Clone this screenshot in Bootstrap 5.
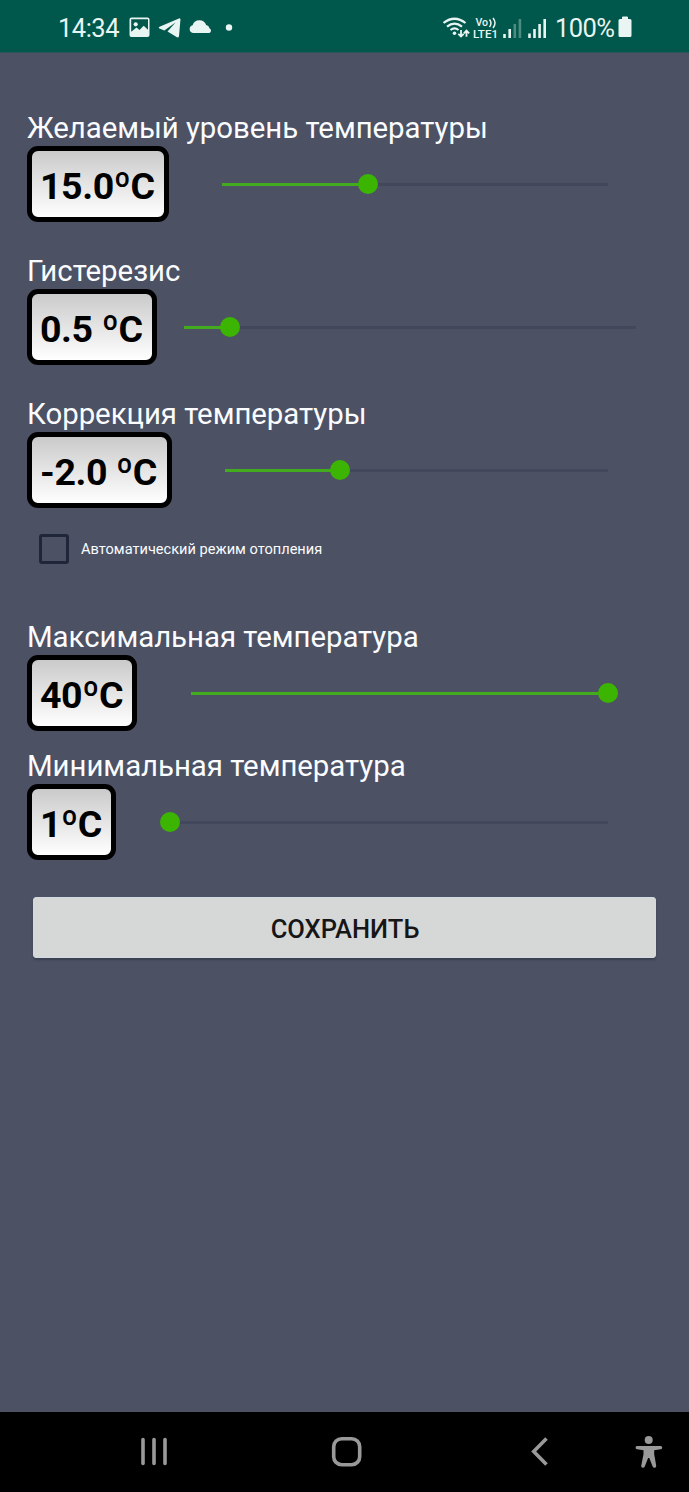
<!DOCTYPE html>
<html lang="ru">
<head>
<meta charset="utf-8">
<meta name="viewport" content="width=device-width, initial-scale=1">
<title>Настройки температуры</title>
<link href="https://cdn.jsdelivr.net/npm/bootstrap@5.3.0/dist/css/bootstrap.min.css" rel="stylesheet">
<style>
html,body{height:100%}
body{background:#4c5164;font-family:Roboto,"Noto Sans",sans-serif;color:#fafcff;overflow:hidden}
.statusbar{height:53px;background:#00574b;color:#e9f5f2;padding:3px 57px 0 58px;font-size:25.5px;line-height:50px;border-bottom:1px solid #2b5458}
.clock{width:71px;letter-spacing:-.5px}
.percent{width:63px;margin-left:4px;letter-spacing:-.6px}
.screen{padding:58px 27px 0}
.setting{height:111px;margin-bottom:32px}
.setting .title{height:35px;font-size:29.4px;line-height:34px;letter-spacing:-.04px;white-space:nowrap}
.value{width:var(--w);height:76px;border:5px solid #000;border-radius:11px;background:linear-gradient(#cacaca,#fff);color:#000;font-size:37.5px;font-weight:700;line-height:70px;letter-spacing:-.4px;padding-left:8px;white-space:nowrap}
.slider{height:3px;background:#42475b;margin-left:var(--gap);width:var(--len)}
.slider .fill{height:100%;width:var(--pos);background:#43ac1e}
.slider .thumb{width:20px;height:20px;border-radius:50%;background:#3cb502;left:var(--pos);top:50%;transform:translate(-50%,-50%)}
.auto{height:30px;margin:-6px 0 56px 12px}
.box{width:30px;height:30px;border:3px solid #20263a;border-radius:3px}
.auto-text{font-size:14.6px;margin-left:12px;line-height:30px;white-space:nowrap}
.save{margin:37px 6px 0;width:623px;height:61px;background:#d6d8d8;border:1px solid #d3dae1;border-radius:3px;color:#161616;font-size:25.5px;font-weight:500;line-height:61px;padding:1px 0 0 1px;box-shadow:0 2px 2px #3b4051}
.navbar-sys{height:80px;background:#000}
</style>
</head>
<body class="d-flex flex-column">
<header class="statusbar d-flex align-items-center justify-content-between flex-shrink-0">
  <div class="d-flex align-items-center">
    <span class="clock">14:34</span>
    <svg width="106" height="30" viewBox="129 12 106 30" fill="#e9f5f2">
      <path fill-rule="evenodd" d="M131.500 16.500h16a2 2 0 0 1 2 2v15.500a2 2 0 0 1-2 2h-16a2 2 0 0 1-2-2v-15.500a2 2 0 0 1 2-2zm-.3 1.700v12.500l5.300-4.300 3 2.500 4.200-4.200 4.300 4v-10.500z"/>
      <circle cx="135.700" cy="23.300" r="2.100"/>
      <path d="M179.500 17.300L159.500 25.800C158.500 26.400 158.600 27.200 159.500 27.600L164.300 29.500L175.500 21.500L167.500 30.500L177 36.300C178 36.700 178.700 36.300 179 35.200L180.500 18Z"/>
      <path d="M193 32a4 4 0 0 1-.4-7.800a7.200 7.200 0 0 1 13.600-.2a4.200 4.200 0 0 1 3.300 3.200a2.600 2.600 0 0 1-.2 4.800z"/>
      <circle cx="229" cy="26.500" r="3.200"/>
    </svg>
  </div>
  <div class="d-flex align-items-center">
    <svg width="108" height="30" viewBox="443 12 108 30" fill="none" stroke="#e9f5f2">
      <path stroke-width="2.200" d="M443.500 22Q454.500 13.500 465.500 22M447 25.600Q454.500 19.500 462 25.600M450.500 29Q454.500 25.800 458.500 29"/>
      <circle cx="454.500" cy="32.300" r="1.800" fill="#e9f5f2" stroke="none"/>
      <path stroke-width="1.800" d="M461 29v6M458.300 32.800l2.700 2.700 2.700-2.700M466.500 35.800v-6M463.800 32.300l2.700-2.700 2.700 2.700"/>
      <g fill="#e9f5f2" stroke="none" font-family="Roboto,sans-serif" font-weight="500">
        <text x="475.500" y="25.300" font-size="10.600">Vo</text>
        <text x="473" y="37" font-size="11.300" textLength="25" lengthAdjust="spacingAndGlyphs">LTE1</text>
      </g>
      <path stroke-width="1.500" d="M489.500 18.500q3 3.700 0 7.500M493 17q4 5 0 10"/>
      <path stroke-width="2.600" d="M504.500 37v-4M509.700 37v-9M529.500 37v-4.500M534.500 37v-9M539.600 37v-14M544.700 37v-19"/>
      <path stroke="#6fa199" stroke-width="2.600" d="M514.800 37v-14M519.900 37v-19" opacity=".7"/>
    </svg>
    <span class="percent">100%</span>
    <svg width="14" height="24" viewBox="0 0 14 24" fill="#e9f5f2"><path d="M4 4V1.500Q4 .5 5 .5h4q1 0 1 1V3h2q1.500 0 1.500 1.500v15q0 1.500-1.500 1.500H2q-1.500 0-1.500-1.500v-15Q.5 3 2 3h2z"/></svg>
  </div>
</header>

<main class="screen flex-grow-1">
  <section class="setting">
    <div class="title">Желаемый уровень температуры</div>
    <div class="d-flex align-items-center" style="--w:142px;--gap:53px;--len:386px;--pos:146px">
      <div class="value">15.0ºC</div>
      <div class="slider position-relative"><div class="fill"></div><div class="thumb position-absolute"></div></div>
    </div>
  </section>
  <section class="setting">
    <div class="title">Гистерезис</div>
    <div class="d-flex align-items-center" style="--w:130px;--gap:27px;--len:452px;--pos:45.500px">
      <div class="value">0.5 ºC</div>
      <div class="slider position-relative"><div class="fill"></div><div class="thumb position-absolute"></div></div>
    </div>
  </section>
  <section class="setting">
    <div class="title">Коррекция температуры</div>
    <div class="d-flex align-items-center" style="--w:144.500px;--gap:53.500px;--len:383px;--pos:115px">
      <div class="value">-2.0 ºC</div>
      <div class="slider position-relative"><div class="fill"></div><div class="thumb position-absolute"></div></div>
    </div>
  </section>
  <label class="auto d-flex align-items-center"><span class="box"></span><span class="auto-text">Автоматический режим отопления</span></label>
  <section class="setting mb-0">
    <div class="title">Максимальная температура</div>
    <div class="d-flex align-items-center" style="--w:110px;--gap:53.500px;--len:417.500px;--pos:417.500px">
      <div class="value">40ºC</div>
      <div class="slider position-relative"><div class="fill"></div><div class="thumb position-absolute"></div></div>
    </div>
  </section>
  <section class="setting mb-0" style="margin-top:18px">
    <div class="title">Минимальная температура</div>
    <div class="d-flex align-items-center" style="--w:89px;--gap:54px;--len:438px;--pos:0px">
      <div class="value">1ºC</div>
      <div class="slider position-relative"><div class="fill"></div><div class="thumb position-absolute"></div></div>
    </div>
  </section>
  <button class="save btn d-block" type="button">СОХРАНИТЬ</button>
</main>

<nav class="navbar-sys flex-shrink-0">
  <svg class="d-block" width="689" height="80" viewBox="0 1412 689 80" fill="none" stroke="#999" stroke-linecap="round">
    <path stroke-width="3.600" d="M143 1439.500v24M154 1439.500v24M165 1439.500v24"/>
    <rect x="333.700" y="1438.700" width="26" height="26" rx="8" stroke-width="3.600"/>
    <path stroke-width="3.600" stroke-linecap="butt" d="M546.500 1438.500L533.700 1451.500L546.500 1464.500"/>
    <g fill="#999" stroke="none"><circle cx="648.700" cy="1440" r="4"/>
    <path d="M637.500 1446h23a1.600 1.600 0 0 1 .2 3.300l-6.500 1v4l2 11.500q.2 2-1.500 2t-2.200-1.500l-3.200-8.300h-1.200l-3.200 8.300q-.6 1.500-2.200 1.500t-1.500-2l2.300-11.500v-4l-6.500-1a1.600 1.600 0 0 1 .5-3.300z"/></g>
  </svg>
</nav>
<script src="https://cdn.jsdelivr.net/npm/bootstrap@5.3.0/dist/js/bootstrap.bundle.min.js"></script>
</body>
</html>
